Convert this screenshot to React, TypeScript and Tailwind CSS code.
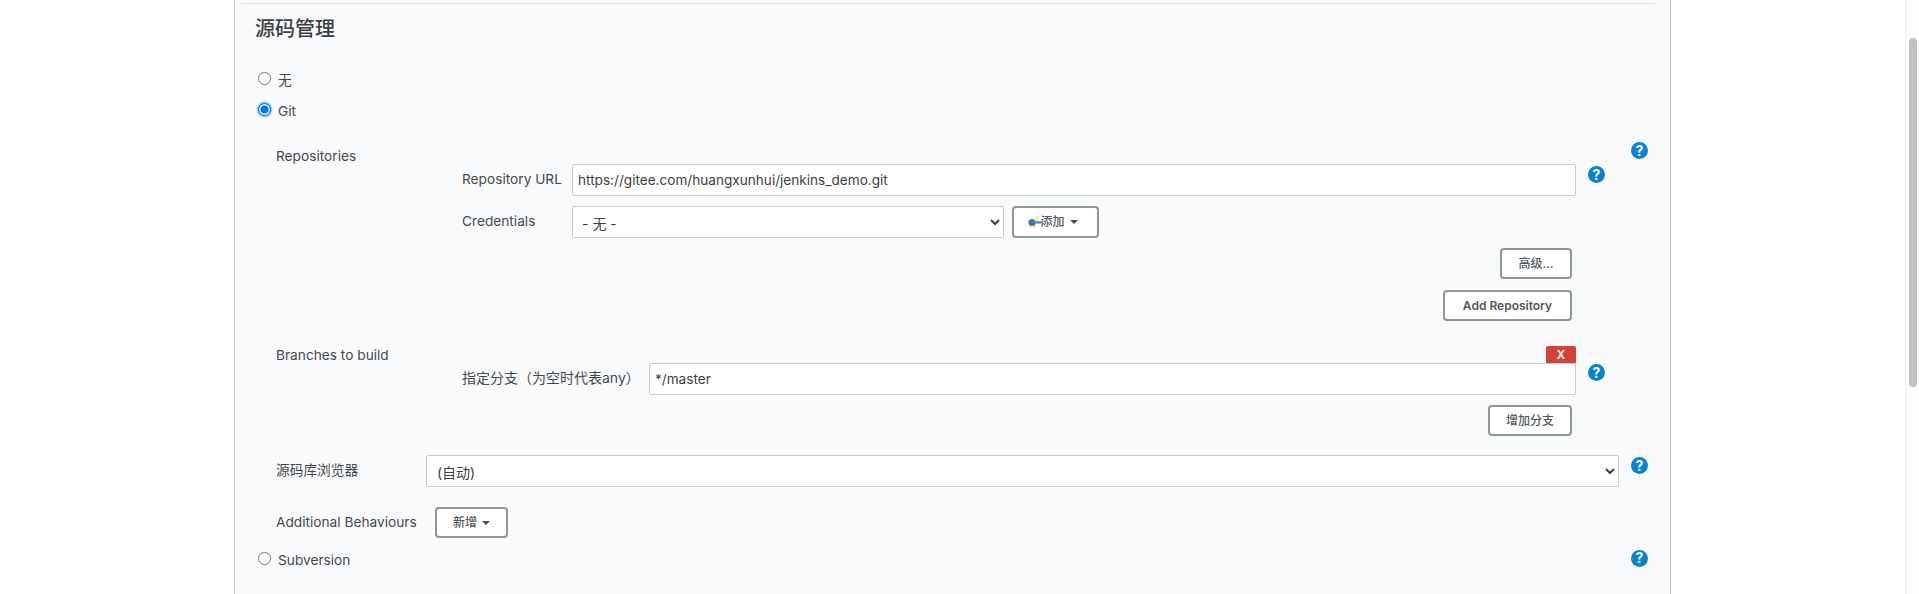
const font = '[font-family:Inter,"Noto_Sans_CJK_SC",sans-serif]';

function Help() {
  return (
    <span className="flex h-[17px] w-[17px] shrink-0 items-center justify-center rounded-full bg-[#0a83cf] text-[14px] font-bold leading-none text-white">
      ?
    </span>
  );
}

function Btn({ children, className = '' }: { children: React.ReactNode; className?: string }) {
  return (
    <button className={`flex h-[31px] items-center justify-center rounded-[4px] border-2 border-[#8f9699] bg-white text-[12px] font-medium text-[#53585d] ${className}`}>
      {children}
    </button>
  );
}

function Caret() {
  return <span className="ml-[5px] h-0 w-0 border-x-[4px] border-t-[4px] border-x-transparent border-t-[#4b5055]" />;
}

function KeyIcon() {
  return (
    <svg width="15" height="13" viewBox="0 0 15 13" className="shrink-0">
      <path d="M7 0h4v6H7z" fill="#fdf58c" />
      <path d="M2 8h6v4H2z" fill="#f3f1c8" />
      <circle cx="4" cy="6.5" r="3.6" fill="#3f78ad" />
      <path d="M6 5.2h9v2.4H6z" fill="#5b8fc0" />
    </svg>
  );
}

function Radio({ label, checked = false }: { label: string; checked?: boolean }) {
  return (
    <label className="flex h-[26px] items-center pl-[23px] text-[13.7px] text-[#45494e]">
      <input
        type="radio"
        name="scm"
        defaultChecked={checked}
        className={`m-0 -mt-[2px] h-[13px] w-[13px] appearance-none rounded-full border ${
          checked
            ? 'border-[#0075ff] bg-[#0075ff] shadow-[inset_0_0_0_1.5px_#ffffff,0_0_0_1.5px_#9cc8fb]'
            : 'border-[#767676] bg-white'
        }`}
      />
      <span className="ml-[7px] pt-[2px]">{label}</span>
    </label>
  );
}

const field = 'h-[32px] rounded-[2px] border border-[#c9cccf] bg-white text-[13.6px] text-[#3b3f44]';

export default function App() {
  return (
    <div className={`flex h-[594px] w-[1919px] overflow-hidden bg-white ${font}`}>
      <div className="ml-[234px] h-full w-[1437px] border-x border-[#c6c8ca] bg-[#f9fafc] text-[13.7px] text-[#45494e]">
        <div className="ml-[6px] mt-[3px] h-px w-[1414px] bg-[#dcdee0]" />
        <h2 className="flex h-[50px] items-center pl-[20px] text-[20px] font-medium text-[#3b3f44]">源码管理</h2>

        <div className="mt-[12px]">
          <Radio label="无" />
        </div>
        <div className="mt-[5px]">
          <Radio label="Git" checked />
        </div>

        <div className="mt-[20px] flex h-[21px] items-start justify-between pl-[41px] pr-[22px]">
          <span className="mt-[3px] leading-5">Repositories</span>
          <span className="-mt-px">
            <Help />
          </span>
        </div>

        <div className="flex h-[32px] pl-[227px]">
          <span className="w-[110px] pt-[5px] leading-5">Repository URL</span>
          <input readOnly value="https://gitee.com/huangxunhui/jenkins_demo.git" className={`${field} w-[1004px] px-[5px]`} />
          <span className="ml-[12px] mt-[2px]">
            <Help />
          </span>
        </div>

        <div className="mt-[10px] flex h-[32px] pl-[227px]">
          <span className="w-[110px] pt-[5px] leading-5">Credentials</span>
          <select className={`${field} w-[432px] pl-[5px] pr-[2px] pt-[3px] text-[14px]`}>
            <option>- 无 -</option>
          </select>
          <Btn className="ml-[8px] h-[32px] w-[87px] pr-[5px]">
            <KeyIcon />
            <span className="-ml-[3px]">添加</span>
            <Caret />
          </Btn>
        </div>

        <div className="mt-[10px] flex w-[1337px] justify-end">
          <Btn className="w-[72px]">高级...</Btn>
        </div>
        <div className="mt-[11px] flex w-[1337px] justify-end">
          <Btn className="w-[129px] font-semibold">Add Repository</Btn>
        </div>

        <div className="mt-[25px] flex h-[18px] w-[1341px] items-center justify-between pl-[41px]">
          <span className="leading-5">Branches to build</span>
          <button className="flex h-[18px] w-[30px] items-center justify-center rounded-[2px] bg-[#d0423a] text-[12px] font-bold text-[#fbe9e7]">
            X
          </button>
        </div>

        <div className="-mt-px flex h-[32px] pl-[227px]">
          <span className="w-[187px] pt-[5px] text-[14px] leading-5">指定分支（为空时代表any）</span>
          <input readOnly value="*/master" className={`${field} w-[927px] px-[5px] pb-[1px]`} />
          <span className="ml-[12px] mt-[1px]">
            <Help />
          </span>
        </div>

        <div className="mt-[10px] flex w-[1337px] justify-end">
          <Btn className="w-[84px]">增加分支</Btn>
        </div>

        <div className="mt-[19px] flex h-[32px] pl-[41px]">
          <span className="w-[150px] pt-[5px] leading-5">源码库浏览器</span>
          <select className={`${field} w-[1193px] pl-[6px] pr-[2px] pt-[2px] text-[14px]`}>
            <option>(自动)</option>
          </select>
          <span className="ml-[12px] mt-[2px]">
            <Help />
          </span>
        </div>

        <div className="mt-[20px] flex h-[31px] items-center pl-[41px]">
          <span className="w-[159px]">Additional Behaviours</span>
          <Btn className="w-[73px]">
            新增
            <Caret />
          </Btn>
        </div>

        <div className="mt-[8px] flex items-center justify-between pr-[22px]">
          <Radio label="Subversion" />
          <span className="-mt-[2px]">
            <Help />
          </span>
        </div>
      </div>

      <div className="ml-[234px] h-full w-[14px] border-l border-[#ececec] bg-[#fdfdfd] pl-[3px] pt-[38px]">
        <div className="h-[349px] w-[8px] rounded-full bg-[#c1c1c1]" />
      </div>
    </div>
  );
}
